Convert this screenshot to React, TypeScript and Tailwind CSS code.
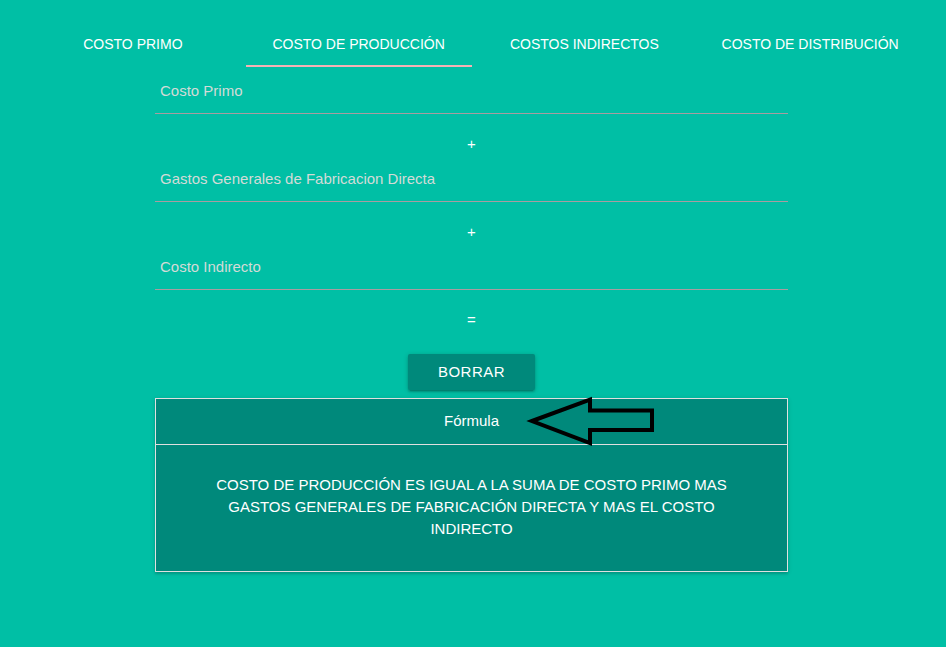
import React from "react";

const tabs = ["COSTO PRIMO", "COSTO DE PRODUCCIÓN", "COSTOS INDIRECTOS", "COSTO DE DISTRIBUCIÓN"];

function Field({ label }: { label: string }) {
  return (
    <div className="border-b border-[#a99ca0] pb-[11px] pl-[5px]">
      <div className="text-[15px] leading-[22px] text-[#d3dbd7]">{label}</div>
    </div>
  );
}

function Op({ sym, mt }: { sym: string; mt: string }) {
  return <div className={`text-center text-[15px] leading-[22px] text-white ${mt}`}>{sym}</div>;
}

export default function App() {
  return (
    <div
      className="min-h-screen w-full bg-[#00bfa5] pt-[20px]"
      style={{ fontFamily: '"Liberation Sans", Arial, sans-serif' }}
    >
      <div className="w-[943px]">
        <div className="mx-[20px] flex h-[48px]">
          {tabs.map((t, i) => (
            <div key={t} className="relative flex flex-1 items-center justify-center text-[14px] text-white">
              {t}
              {i === 1 && <div className="absolute bottom-[1px] left-0 right-0 h-[2px] bg-[#f6b2b5]" />}
            </div>
          ))}
        </div>

        <div className="mx-auto w-[633px]">
          <div className="mt-[12px]">
            <Field label="Costo Primo" />
          </div>
          <Op sym="+" mt="mt-[19px]" />
          <div className="mt-[13px]">
            <Field label="Gastos Generales de Fabricacion Directa" />
          </div>
          <Op sym="+" mt="mt-[19px]" />
          <div className="mt-[13px]">
            <Field label="Costo Indirecto" />
          </div>
          <Op sym="=" mt="mt-[19px]" />

          <div className="mt-[23px] flex justify-center">
            <button className="h-[36px] rounded-[2px] bg-[#00897b] px-[30px] text-[15px] tracking-[0.5px] text-white shadow-[0_2px_2px_0_rgba(0,0,0,0.14),0_3px_1px_-2px_rgba(0,0,0,0.12),0_1px_5px_0_rgba(0,0,0,0.2)]">
              BORRAR
            </button>
          </div>

          <div className="relative mt-[8px] border border-[#e0e0e0] bg-[#00897b] shadow-[0_2px_2px_0_rgba(0,0,0,0.14),0_1px_5px_0_rgba(0,0,0,0.12)]">
            <div className="flex h-[46px] items-center justify-center border-b border-[#e0e0e0] text-[15px] text-white">
              Fórmula
            </div>
            <div className="px-[30px] pb-[31px] pt-[29px] text-center text-[15px] leading-[22px] text-white">
              COSTO DE PRODUCCIÓN ES IGUAL A LA SUMA DE COSTO PRIMO MAS GASTOS GENERALES DE FABRICACIÓN DIRECTA Y MAS EL COSTO INDIRECTO
            </div>
            <svg
              className="pointer-events-none absolute left-[-1px] top-[-1px] overflow-visible"
              width="633"
              height="60"
              viewBox="0 0 633 60"
            >
              <polygon
                points="377,23 435,1.5 435,12.5 497,12.5 497,32 435,32 435,45"
                fill="none"
                stroke="#000"
                strokeWidth="4"
                strokeLinejoin="miter"
              />
            </svg>
          </div>
        </div>
      </div>
    </div>
  );
}
